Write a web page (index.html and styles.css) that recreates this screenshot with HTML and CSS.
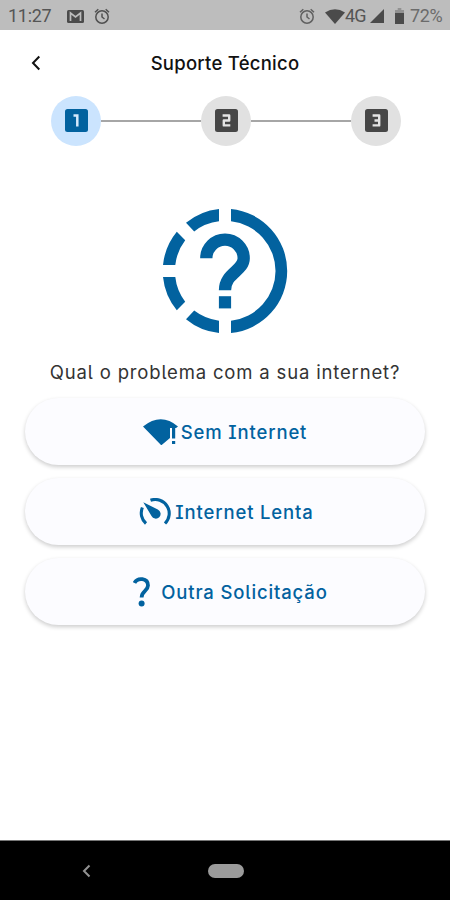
FILE: index.html
```html
<!DOCTYPE html>
<html lang="pt-BR">
<head>
<meta charset="utf-8">
<title>Suporte Técnico</title>
<link rel="stylesheet" href="styles.css">
</head>
<body>
<div class="status">
  <span class="clock">11:27</span>
  <svg class="mail" width="17" height="13" viewBox="0 0 17 13"><rect width="17" height="13" rx="1.5" fill="#4b4b4b"/><path d="M3.5 11V3L8.5 7 13.5 3V11" fill="none" stroke="#bdbdbd" stroke-width="1.7"/></svg>
  <svg class="alarm" width="16" height="17" viewBox="0 0 16 17" fill="none" stroke="#505050" stroke-width="1.5"><circle cx="8" cy="9" r="6.2"/><path d="M1 4.2L4.3 1.3M11.7 1.3L15 4.2M8 5.5V9L10.5 11"/></svg>
  <svg class="alarm right" width="16" height="17" viewBox="0 0 16 17" fill="none" stroke="#606060" stroke-width="1.5"><circle cx="8" cy="9" r="6.2"/><path d="M1 4.2L4.3 1.3M11.7 1.3L15 4.2M8 5.5V9L10.5 11"/></svg>
  <svg class="wifi" width="20" height="15" viewBox="0 0 20 15"><path d="M0 3.5Q10-3 20 3.5L10 15Z" fill="#4b4b4b"/></svg>
  <span class="net">4G</span>
  <svg class="signal" width="14" height="14" viewBox="0 0 14 14"><path d="M14 0V14H0Z" fill="#4b4b4b"/></svg>
  <svg class="battery" width="9" height="16" viewBox="0 0 10 16" preserveAspectRatio="none"><path d="M3 0H7V2H10V6H0V2H3Z" fill="#929292"/><path d="M0 5H10V16H0Z" fill="#4b4b4b"/></svg>
  <span class="percent">72%</span>
</div>
<header class="header">
  <svg class="back" width="10" height="16" viewBox="0 0 10 16"><path d="M8.3 1.5L2 8L8.3 14.5" fill="none" stroke="#111" stroke-width="2"/></svg>
  <h1 class="title">Suporte Técnico</h1>
</header>
<div class="steps">
  <div class="step active"><svg width="23" height="23" viewBox="0 0 23 23"><rect width="23" height="23" rx="2.5" fill="#02629f"/><path d="M8.5 6.5H12.3V17.5" fill="none" stroke="#d5e9fc" stroke-width="2.5"/></svg></div>
  <div class="line"></div>
  <div class="step"><svg width="23" height="23" viewBox="0 0 23 23"><rect width="23" height="23" rx="2.5" fill="#464646"/><path d="M7.6 6.5H14.2V11.5H8.8V16.4H15.3" fill="none" stroke="#e4e4e4" stroke-width="2.4" stroke-linejoin="round"/></svg></div>
  <div class="line"></div>
  <div class="step"><svg width="23" height="23" viewBox="0 0 23 23"><rect width="23" height="23" rx="2.5" fill="#464646"/><path d="M7.6 6.5H14.2V16.4H7.6M9.5 11.5H14.2" fill="none" stroke="#e4e4e4" stroke-width="2.4" stroke-linejoin="round"/></svg></div>
</div>
<main class="content">
  <svg class="hero" width="126" height="126" viewBox="-63 -63 126 126" fill="#02629f">
    <path d="M6-62A62.3 62.3 0 0 1 6 62V49.7A50 50 0 0 0 6-49.7Z"/>
    <path d="M-6-62V-49.7A50 50 0 0 0-30.8-39.6L-39-48.2A62 62 0 0 1-6-62Z"/>
    <path d="M-48.2-39.2L-39.8-30.8A50 50 0 0 0-49.7-6H-62A62 62 0 0 1-48.2-39.2Z"/>
    <path d="M-6 62V49.7A50 50 0 0 1-30.8 39.6L-39 48.2A62 62 0 0 0-6 62Z"/>
    <path d="M-48.2 39.2L-39.8 30.8A50 50 0 0 1-49.7 6H-62A62 62 0 0 0-48.2 39.2Z"/>
    <path d="M-18.7-12.7A18.7 18.7 0 0 1 18.7-12.7C18.7 0 0 2 0 19.2" fill="none" stroke="#02629f" stroke-width="12.3"/>
    <path d="M-6.1 25.2H6.1V37.4H-6.1Z"/>
  </svg>
  <p class="question">Qual o problema com a sua internet?</p>
  <div class="options">
    <button class="option">
      <svg width="35" height="26" viewBox="0 0 35 26" fill="#02629f"><path d="M0 7.5Q18-7 35 7.5L33 9H27V19L24 21.5L18.3 26.3Z"/><path d="M29 9H32.2V19.5H29ZM29 22H32.2V25H29Z"/></svg>
      <span class="label sem">Sem Internet</span>
    </button>
    <button class="option lenta">
      <svg width="33" height="28" viewBox="0 0 33 28"><path d="M11.5 2.3A14 14 0 0 1 26 25.5M3.4 9.5A14 14 0 0 0 7 25.5" fill="none" stroke="#02629f" stroke-width="3.1"/><path d="M4.3 4.3L18.8 11.5A4.8 4.8 0 1 1 12.5 18Z" fill="#02629f"/></svg>
      <span class="label">Internet Lenta</span>
    </button>
    <button class="option outra">
      <svg width="18" height="30" viewBox="0 0 18 30"><path d="M1.5 6C4.5 .2 15 .8 15 8.6C15 14 8.6 14 8.6 20.5" fill="none" stroke="#02629f" stroke-width="3.8"/><circle cx="8.6" cy="26.5" r="3" fill="#02629f"/></svg>
      <span class="label">Outra Solicitação</span>
    </button>
  </div>
</main>
<nav class="nav">
  <svg class="nav-back" width="9" height="14" viewBox="0 0 9 14"><path d="M7.5 1.5L2 7L7.5 12.5" fill="none" stroke="#929292" stroke-width="2"/></svg>
  <span class="home"></span>
</nav>
</body>
</html>
```
FILE: styles.css
```css
* { box-sizing: border-box; }
body {
  margin: 0;
  width: 450px;
  height: 900px;
  display: flex;
  flex-direction: column;
  background: #fff;
  overflow: hidden;
  font-family: Inter, "Noto Sans", sans-serif;
  font-feature-settings: "ss02", "cv05", "cv08", "zero" 0;
}
svg { display: block; flex: none; }
.status {
  height: 30px;
  flex: none;
  display: flex;
  align-items: center;
  padding: 2px 6px 0 8px;
  background: #bdbdbd;
  color: #555;
  font: 18px/28px Roboto, sans-serif;
}
.clock { width: 43px; white-space: nowrap; letter-spacing: -0.3px; }
.mail { margin-left: 16px; }
.alarm { margin-left: 10px; }
.alarm.right { margin-left: auto; }
.wifi { margin-left: 10px; }
.net { width: 23px; letter-spacing: -0.8px; }
.signal { margin-left: 2px; }
.battery { margin-left: 11px; }
.percent { width: 34px; margin-left: 6px; white-space: nowrap; color: #6b6b6b; letter-spacing: -0.4px; }
.header {
  height: 65px;
  flex: none;
  display: grid;
  grid-template-columns: 50px 1fr 50px;
  align-items: center;
}
.back { margin: 1px 0 0 31px; }
.title {
  margin: 0;
  text-align: center;
  white-space: nowrap;
  color: #111;
  font-size: 18.5px;
  font-weight: 500;
  letter-spacing: 0.25px;
}
.steps { display: flex; align-items: center; padding: 0 49px 0 51px; height: 51px; flex: none; }
.step {
  width: 50px;
  height: 50px;
  flex: none;
  border-radius: 50%;
  display: grid;
  place-items: center;
  background: #e1e1e1;
}
.step.active { background: #cbe4fe; }
.line { flex: 1; height: 2px; background: #a6a6a6; }
.content { flex: 1; display: flex; flex-direction: column; align-items: center; padding-top: 62px; }
.question {
  margin: 26px 0 0;
  height: 24px;
  line-height: 24px;
  white-space: nowrap;
  color: #333;
  font-size: 18.5px;
  letter-spacing: 0.83px;
}
.options { display: flex; flex-direction: column; gap: 13px; margin-top: 14px; width: 400px; }
.option {
  height: 67px;
  border: 0;
  padding: 0;
  border-radius: 34px;
  display: flex;
  align-items: center;
  justify-content: center;
  background: #fcfcff;
  box-shadow: 0 2px 4px rgba(0, 0, 0, 0.2);
  color: #02629f;
  font-family: inherit;
  font-feature-settings: inherit;
}
.option.lenta { padding-left: 3px; }
.option.outra { padding-left: 11px; }
.label {
  margin-left: 3px;
  white-space: nowrap;
  font-size: 18.5px;
  font-weight: 550;
  line-height: 24px;
  letter-spacing: 0.85px;
}
.outra .label { margin-left: 10px; }
.nav {
  height: 60px;
  flex: none;
  display: flex;
  align-items: center;
  padding: 0 0 0 82px;
  border-top: 1px solid #777;
  background: #000;
}
.home { width: 36px; height: 14px; margin-left: 117px; border-radius: 7px; background: #9b9b9b; }
```
